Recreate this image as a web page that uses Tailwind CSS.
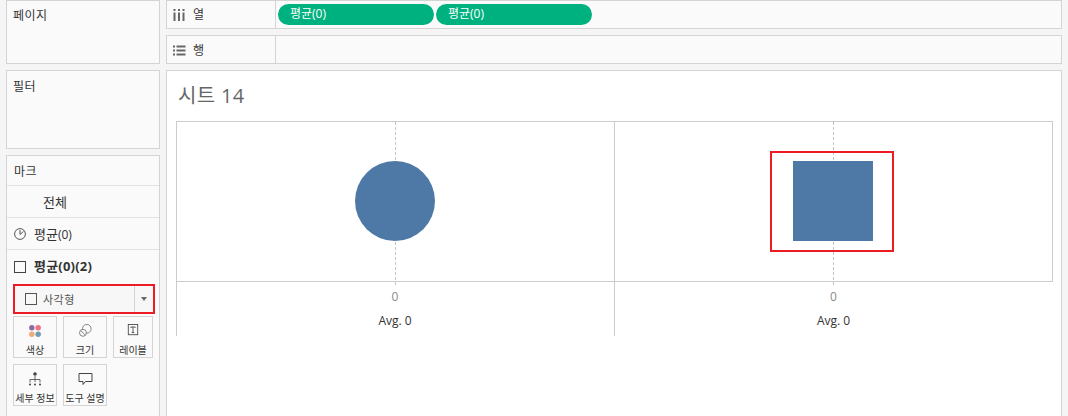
<!DOCTYPE html>
<html lang="ko">
<head>
<meta charset="UTF-8" />
<title>시트 14</title>
<script src="https://cdn.jsdelivr.net/npm/@tailwindcss/browser@4"></script>
</head>
<body class="bg-[#f5f5f5] h-[416px] w-[1068px] overflow-hidden flex gap-[6px] pl-[6px] font-['Open_Sans','Noto_Sans_CJK_KR',sans-serif] text-[#333333]">
<!-- left column -->
<aside class="w-[154px] flex flex-col gap-[6px] shrink-0">
    <div class="h-[64px] border border-[#d4d4d4] bg-[#fafafa] pl-[6px] pt-[6px] text-[12px] leading-[18px] tracking-[0.5px]">페이지</div>
    <div class="h-[80px] border border-[#d4d4d4] bg-[#fafafa] pl-[6px] pt-[7px] text-[12px] leading-[18px] tracking-[0.5px]">필터</div>
    <!-- marks -->
    <div class="h-[262px] border border-b-0 border-[#d4d4d4] bg-[#fafafa] flex flex-col">
        <div class="h-[30px] border-b border-[#e2e2e2] pl-[7px] pt-[7px] text-[12px] leading-[18px] tracking-[0.5px]">마크</div>
        <div class="h-[32px] border-b border-[#e2e2e2] pl-[36px] pt-[6px] text-[13px] leading-[20px]">전체</div>
        <div class="h-[32px] border-b border-[#e2e2e2] pl-[7px] flex items-center gap-[8px] text-[13px]">
            <svg width="12" height="12" viewBox="0 0 12 12" fill="none" stroke="#555555" stroke-width="1"><circle cx="6" cy="6" r="5.4"/><path d="M6 6.5V2M6 6.5L9.5 3.4"/></svg>
            <span class="pt-[2px]">평균<span class="text-[12px]">(0)</span></span>
        </div>
        <div class="h-[34px] pl-[7px] pb-[1px] flex items-center gap-[8px] text-[13px] font-bold tracking-[0.2px]">
            <span class="w-[12px] h-[12px] border border-[#444444]"></span>
            <span>평균(0)(2)</span>
        </div>
        <!-- mark type dropdown -->
        <div class="ml-[6px] w-[142px] h-[30px] border-2 border-[#ed1c24] bg-[#f7f7f7] flex items-center text-[11px] tracking-[0.5px] text-[#555555] shrink-0">
            <span class="w-[12px] h-[12px] border border-[#555555] ml-[10px]"></span>
            <span class="ml-[6px] flex-1 pt-[1px]">사각형</span>
            <span class="h-full border-l border-[#d4d4d4] w-[19px] flex items-center justify-center">
                <span class="w-0 h-0 border-x-[3.5px] border-x-transparent border-t-[4px] border-t-[#666666]"></span>
            </span>
        </div>
        <!-- mark cards -->
        <div class="ml-[6px] mt-[2px] grid grid-cols-[44px_44px_40px] gap-[6px]">
            <div class="h-[42px] border border-[#d4d4d4] flex flex-col items-center pt-[8px] text-[10px] leading-[13px]">
                <svg width="14" height="14" viewBox="0 0 14 14"><circle cx="3.3" cy="3.3" r="3.2" fill="#8d6a9f"/><circle cx="10.7" cy="3.3" r="3.2" fill="#ef6f87"/><circle cx="3.3" cy="10.7" r="3.2" fill="#f2a97a"/><circle cx="10.7" cy="10.7" r="3.2" fill="#6f9eae"/></svg>
                <span class="mt-[7px]">색상</span>
            </div>
            <div class="h-[42px] border border-[#d4d4d4] flex flex-col items-center pt-[7px] text-[10px] leading-[13px]">
                <svg width="15" height="15" viewBox="0 0 15 15" fill="none" stroke="#666666" stroke-width="0.9"><circle cx="9" cy="5.5" r="5"/><circle cx="4.6" cy="10.2" r="4" fill="#fafafa"/><path d="M2.2 7.8l4.8 4.8"/></svg>
                <span class="mt-[7px]">크기</span>
            </div>
            <div class="h-[42px] border border-[#d4d4d4] flex flex-col items-center pt-[7px] text-[10px] leading-[13px]">
                <svg width="12" height="14" viewBox="0 0 12 14" fill="none" stroke="#444444" stroke-width="1"><rect x="0.5" y="0.5" width="11" height="12"/><path d="M3.5 4.5V3.5H8.5V4.5M6 3.5V10M4.5 10H7.5"/></svg>
                <span class="mt-[8px] whitespace-nowrap">레이블</span>
            </div>
            <div class="h-[42px] border border-[#d4d4d4] flex flex-col items-center pt-[7px] text-[10px] leading-[13px]">
                <svg width="14" height="14" viewBox="0 0 14 14" fill="none" stroke="#444444" stroke-width="0.8"><circle cx="7" cy="2" r="1.8" fill="#444444" stroke="none"/><path d="M7 4V10M2 10.5V7.5H12V10.5"/><circle cx="2" cy="12.5" r="1" fill="#444444" stroke="none"/><circle cx="7" cy="12.5" r="1" fill="#444444" stroke="none"/><circle cx="12" cy="12.5" r="1" fill="#444444" stroke="none"/></svg>
                <span class="mt-[6px] whitespace-nowrap">세부 정보</span>
            </div>
            <div class="h-[42px] border border-[#d4d4d4] flex flex-col items-center pt-[8px] text-[10px] leading-[13px]">
                <svg width="15" height="13" viewBox="0 0 15 13" fill="none" stroke="#444444" stroke-width="1"><path d="M1 0.5H14V8.5H7.5L5 11.5V8.5H1Z"/></svg>
                <span class="mt-[6px] whitespace-nowrap">도구 설명</span>
            </div>
        </div>
    </div>
</aside>
<!-- right column -->
<main class="w-[896px] flex flex-col gap-[6px] shrink-0">
    <div class="h-[29px] border border-[#d4d4d4] bg-[#fafafa] flex text-[12px]">
        <div class="w-[109px] border-r border-[#d4d4d4] flex items-center pl-[6px] gap-[8px] shrink-0">
            <svg width="12" height="12" viewBox="0 0 12 12" fill="#666666"><rect x="0.5" y="0" width="2" height="2"/><rect x="0.5" y="3.5" width="2" height="8.5"/><rect x="5" y="0" width="2" height="2"/><rect x="5" y="3.5" width="2" height="8.5"/><rect x="9.5" y="0" width="2" height="2"/><rect x="9.5" y="3.5" width="2" height="8.5"/></svg>
            <span class="pt-[1px]">열</span>
        </div>
        <div class="flex items-center gap-[2px] pl-[2px]">
            <div class="w-[156px] h-[21px] rounded-full bg-[#00b180] text-white pl-[12px] leading-[19px]">평균(0)</div>
            <div class="w-[156px] h-[21px] rounded-full bg-[#00b180] text-white pl-[12px] leading-[19px]">평균(0)</div>
        </div>
    </div>
    <div class="h-[29px] border border-[#d4d4d4] bg-[#fafafa] flex text-[12px]">
        <div class="w-[109px] border-r border-[#d4d4d4] flex items-center pl-[6px] gap-[7px] shrink-0">
            <svg class="mt-[1px]" width="13" height="11" viewBox="0 0 13 11" fill="#666666"><rect x="0" y="0.5" width="2" height="2"/><rect x="3.5" y="0.5" width="9" height="2"/><rect x="0" y="4.5" width="2" height="2"/><rect x="3.5" y="4.5" width="9" height="2"/><rect x="0" y="8.5" width="2" height="2"/><rect x="3.5" y="8.5" width="9" height="2"/></svg>
            <span class="pt-[3px]">행</span>
        </div>
    </div>
    <!-- view -->
    <div class="h-[346px] border border-b-0 border-[#d4d4d4] bg-white pl-[9px] pt-[11px]">
        <h1 class="text-[20px] leading-[28px] text-[#666666] pl-[2px] h-[39px] font-normal tracking-[0.3px]">시트 14</h1>
        <div class="w-[877px] grid grid-cols-[438px_439px] grid-rows-[160px_54px] border-t border-[#cccccc]">
            <!-- circle pane -->
            <div class="border-l border-b border-[#cccccc] pl-[178px] pt-[39px] relative">
                <div class="absolute left-[218px] top-0 -bottom-[4px] border-l border-dashed border-[#c4c4c4]"></div>
                <div class="w-[80px] h-[80px] rounded-full bg-[#4e79a7] relative"></div>
            </div>
            <!-- square pane -->
            <div class="border-l border-r border-b border-[#cccccc] pl-[178px] pt-[39px] relative">
                <div class="absolute left-[218px] top-0 -bottom-[4px] border-l border-dashed border-[#c4c4c4]"></div>
                <div class="w-[80px] h-[80px] bg-[#4e79a7] relative"></div>
                <div class="absolute left-[155px] top-[29px] w-[124px] h-[101px] border-2 border-[#ed1c24]"></div>
            </div>
            <!-- axes -->
            <div class="border-l border-[#cccccc] flex flex-col items-center pr-[1px]">
                <span class="text-[12px] leading-[16px] text-[#8a8a8a] mt-[7px]">0</span>
                <span class="text-[12px] leading-[16px] font-medium text-[#333333] mt-[8px]">Avg. 0</span>
            </div>
            <div class="border-l border-[#cccccc] flex flex-col items-center pr-[1px]">
                <span class="text-[12px] leading-[16px] text-[#8a8a8a] mt-[7px]">0</span>
                <span class="text-[12px] leading-[16px] font-medium text-[#333333] mt-[8px]">Avg. 0</span>
            </div>
        </div>
    </div>
</main>
</body>
</html>
